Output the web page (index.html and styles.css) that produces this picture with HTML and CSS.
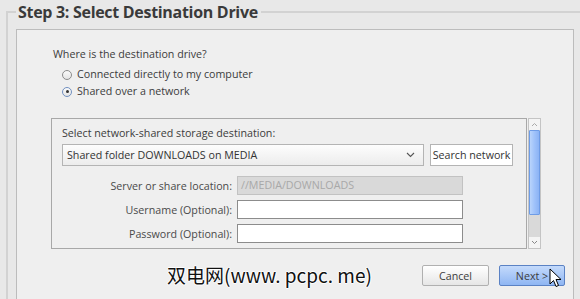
FILE: index.html
```html
<!DOCTYPE html>
<html lang="en">
<head>
    <meta charset="UTF-8">
    <title>Step 3: Select Destination Drive</title>
    <link rel="stylesheet" href="styles.css">
</head>
<body>
    <fieldset class="step">
        <legend class="step-title">Step 3: Select Destination Drive</legend>

        <div class="panel">
            <p class="question">Where is the destination drive?</p>
            <label class="radio"><span class="radio-dot"></span>Connected directly to my computer</label>
            <label class="radio"><span class="radio-dot checked"></span>Shared over a network</label>

            <div class="scroll-area">
                <div class="network-box">
                    <p class="box-label">Select network-shared storage destination:</p>
                    <div class="combo-row">
                        <div class="combo">
                            <span>Shared folder DOWNLOADS on MEDIA</span>
                            <svg class="chevron" width="9" height="6" viewBox="0 0 9 6"><polyline points="1,1 4.5,4.5 8,1" fill="none" stroke="#555" stroke-width="1.1"/></svg>
                        </div>
                        <button class="search-btn">Search network</button>
                    </div>
                    <div class="fields">
                        <span class="field-label">Server or share location:</span>
                        <div class="field disabled">//MEDIA/DOWNLOADS</div>
                        <span class="field-label">Username (Optional):</span>
                        <div class="field"></div>
                        <span class="field-label">Password (Optional):</span>
                        <div class="field"></div>
                    </div>
                </div>

                <div class="scrollbar">
                    <div class="scroll-btn">
                        <svg width="7" height="5" viewBox="0 0 7 5"><polyline points="1,4 3.5,1.5 6,4" fill="none" stroke="#aaa" stroke-width="1"/></svg>
                    </div>
                    <div class="scroll-thumb"></div>
                    <div class="scroll-track"></div>
                    <div class="scroll-btn">
                        <svg width="7" height="5" viewBox="0 0 7 5"><polyline points="1,1 3.5,3.5 6,1" fill="none" stroke="#888" stroke-width="1"/></svg>
                    </div>
                </div>
            </div>

            <div class="actions">
                <button class="btn">Cancel</button>
                <button class="btn primary">Next &gt;</button>
            </div>
        </div>
    </fieldset>

    <div class="watermark">双电网(www. pcpc. me)</div>

    <svg class="cursor" width="13" height="21" viewBox="0 0 13 21">
        <path d="M1 1 L1 16 L4.5 12.5 L7 18.5 L9.5 17.5 L7 11.5 L12 11.5 Z" fill="#fff" stroke="#000" stroke-width="1" stroke-linejoin="round"/>
    </svg>
</body>
</html>
```

FILE: styles.css
```css
body {
    margin: 0;
    background: #e8e8e8;
    color: #3c3c3c;
    font-family: "Open Sans", "Noto Sans", sans-serif;
    font-size: 10.7px;
    overflow: hidden;
    height: 299px;
    position: relative;
}

.step {
    margin: 0 0 0 6px;
    padding: 5px 0 0 8px;
    border: 2px solid #d2d2d2;
    border-right: none;
    border-bottom: none;
    min-width: 0;
}

.step-title {
    padding: 0 3px 0 2px;
    font-size: 16px;
    font-weight: bold;
    letter-spacing: -0.3px;
    line-height: 24px;
    color: #3a3a3a;
}

.panel {
    width: 522px;
    height: 260px;
    border: 1px solid #bcbcbc;
    background: #efefef;
    padding: 17px 0 0 34px;
    display: flex;
    flex-direction: column;
}

.question {
    margin: 0 0 5px 2px;
    line-height: 14px;
}

.radio {
    display: flex;
    align-items: center;
    gap: 5px;
    margin-left: 11px;
    line-height: 17px;
}

.radio-dot {
    width: 8px;
    height: 8px;
    border: 1px solid #8c8c8c;
    border-radius: 50%;
    background: linear-gradient(#fafafa, #e4e4e4);
    position: relative;
}

.radio-dot.checked {
    border-color: #7190c0;
}

.radio-dot.checked::after {
    content: "";
    position: absolute;
    left: 2.5px;
    top: 2.5px;
    width: 3px;
    height: 3px;
    border-radius: 50%;
    background: #333;
}

.scroll-area {
    display: flex;
    gap: 1px;
    margin-top: 18px;
}

.network-box {
    width: 464px;
    border: 1px solid #a8a8a8;
    padding: 7px 0 5px 10px;
}

.box-label {
    margin: 0 0 4px;
    line-height: 14px;
}

.combo-row {
    display: flex;
    gap: 6px;
}

.combo {
    width: 348px;
    height: 20px;
    border: 1px solid #b4b4b4;
    background: linear-gradient(#fdfdfd, #ececec);
    display: flex;
    align-items: center;
    justify-content: space-between;
    padding: 0 8px 0 4px;
    color: #333;
}

.chevron {
    display: block;
}

.search-btn {
    width: 83px;
    height: 22px;
    padding: 0;
    border: 1px solid #b4b4b4;
    background: #fff;
    font: inherit;
    color: #333;
}

.fields {
    display: grid;
    grid-template-columns: 170px 226px;
    column-gap: 5px;
    row-gap: 5px;
    margin-top: 10px;
    align-items: center;
}

.field-label {
    text-align: right;
    color: #4a4a4a;
}

.field {
    height: 17px;
    border: 1px solid #8c8c8c;
    background: #fff;
    line-height: 17px;
    padding-left: 3px;
}

.field.disabled {
    background: #d9d9d9;
    border-color: #c2c2c2;
    color: #a8a8a8;
}

.scrollbar {
    width: 11px;
    border: 1px solid #c4c4c4;
    display: flex;
    flex-direction: column;
    background: #d9d9d9;
}

.scroll-btn {
    height: 11px;
    background: #f4f4f4;
    display: flex;
    align-items: center;
    justify-content: center;
}

.scroll-thumb {
    height: 83px;
    border: 1px solid #6e9ce6;
    border-radius: 1px;
    background: linear-gradient(90deg, #b9d4fb, #9fc2fa 50%, #8bb3f5);
}

.scroll-track {
    flex: 1;
}

.actions {
    display: flex;
    justify-content: flex-end;
    gap: 10px;
    margin-top: 16px;
    padding-right: 8px;
}

.btn {
    width: 67px;
    height: 21px;
    padding: 0;
    border: 1px solid #b0b0b0;
    border-radius: 2px;
    background: linear-gradient(#ffffff, #e6e6e6);
    font: inherit;
    color: #3c3c3c;
}

.btn.primary {
    width: 66px;
    border-color: #5b82c4;
    background: linear-gradient(#c4dafb, #8fb6f3);
}

.watermark {
    position: absolute;
    left: 167px;
    top: 261px;
    font-family: "Noto Sans CJK SC", "DejaVu Sans", sans-serif;
    font-size: 19px;
    color: #111;
    text-shadow: 1px 0 #fff, -1px 0 #fff, 0 1px #fff, 0 -1px #fff;
}

.cursor {
    position: absolute;
    left: 549px;
    top: 268px;
}
```
